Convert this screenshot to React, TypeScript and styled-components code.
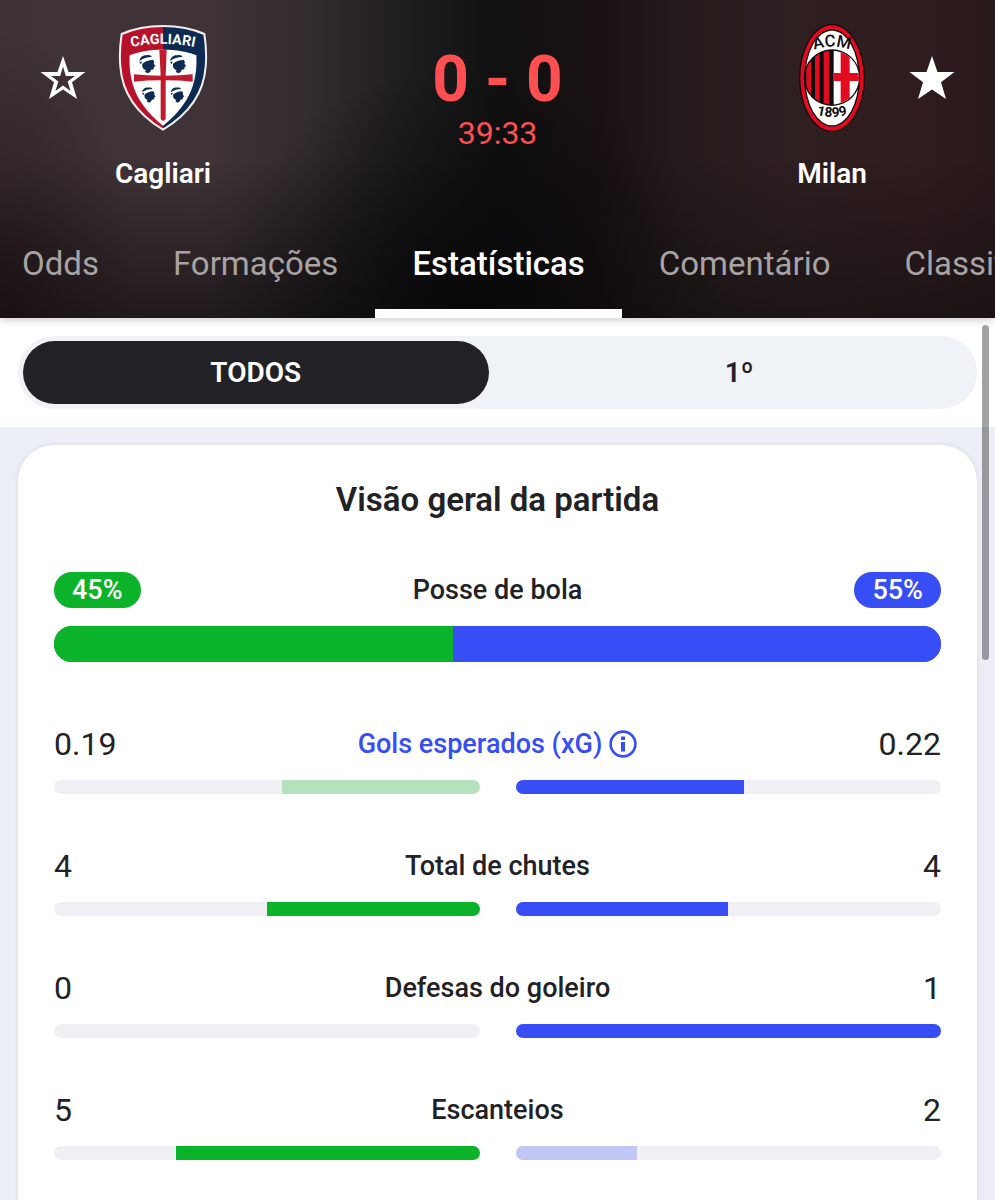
import React from 'react'
import styled, { createGlobalStyle } from 'styled-components'

const GlobalStyle = createGlobalStyle`
	* {
		box-sizing: border-box;
	}

	body {
		margin: 0;
		font-family: Roboto, 'Liberation Sans', sans-serif;
		color: #222226;
	}

	h1, h2, p {
		margin: 0;
	}

	button {
		padding: 0;
		border: 0;
		background: none;
		font: inherit;
		color: inherit;
		cursor: pointer;
	}
`

const Screen = styled.div`
	display: flex;
	flex-direction: column;
	height: 100vh;
	overflow: hidden;
	background: #ebeef5;
`

const MatchHeader = styled.header`
	position: relative;
	z-index: 1;
	flex: none;
	background:
		radial-gradient(ellipse 26% 80% at 47% 100%, rgba(7, 7, 8, 0.9) 0%, rgba(7, 7, 8, 0) 100%),
		radial-gradient(ellipse 14% 90% at 0% 100%, rgba(20, 10, 12, 0.6) 0%, rgba(20, 10, 12, 0) 100%),
		linear-gradient(180deg, rgba(20, 16, 18, 0) 50%, rgba(20, 16, 18, 0.7) 100%),
		linear-gradient(90deg, #3f3236 0%, #403337 20%, #332c30 31%, #1c1b1d 42%, #111112 50%, #1a1112 60%, #261b1c 68%, #2e1f21 80%, #301c1e 92%, #2a191b 100%);
	box-shadow: 0 2px 8px rgba(0, 0, 0, 0.2);
`

const Scoreboard = styled.div`
	display: flex;
	align-items: flex-start;
	padding: 24px 13px 18px;
	color: #fff;
`

const FavoriteButton = styled.button`
	display: flex;
	align-items: center;
	justify-content: center;
	width: 100px;
	height: 108px;
`

const Team = styled.div`
	display: flex;
	flex-direction: column;
	align-items: center;
	gap: 22px;
	width: 100px;
`

const TeamName = styled.h2`
	font-size: 28px;
	font-weight: 600;
	line-height: 40px;
`

const Score = styled.div`
	flex: 1;
	padding-top: 22px;
	text-align: center;
	color: #ff4f52;
`

const Goals = styled.h1`
	font-size: 64px;
	font-weight: 700;
	line-height: 68px;
`

const Clock = styled.p`
	font-size: 32px;
	line-height: 38px;
`

const Tabs = styled.nav`
	display: flex;
	overflow: hidden;
`

const Tab = styled.button<{ $active?: boolean }>`
	flex: none;
	height: 106px;
	padding: 0 37px;
	border-top: 6px solid transparent;
	border-bottom: 9px solid ${({ $active }) => ($active ? '#fff' : 'transparent')};
	font-size: 33px;
	font-weight: ${({ $active }) => ($active ? 500 : 400)};
	color: ${({ $active }) => ($active ? '#fff' : '#a7a3a4')};

	&:first-child {
		padding-left: 22px;
	}
`

const Content = styled.main`
	position: relative;
	flex: 1;
	min-height: 0;
	overflow: hidden;
`

const ScrollArea = styled.div`
	height: 100%;
	overflow-y: auto;
	scrollbar-width: none;
`

const ScrollThumb = styled.div`
	position: absolute;
	top: 7px;
	right: 6px;
	width: 7px;
	height: 38%;
	border-radius: 4px;
	background: rgba(0, 0, 0, 0.36);
`

const PeriodBar = styled.div`
	padding: 18px;
	background: #fff;
`

const PeriodSwitch = styled.div`
	display: flex;
	gap: 18px;
	padding: 5px;
	border-radius: 36px;
	background: #eff3f7;
`

const Period = styled.button<{ $active?: boolean }>`
	flex: 1;
	height: 63px;
	border-radius: 32px;
	background: ${({ $active }) => ($active ? '#222226' : 'transparent')};
	font-size: 28px;
	font-weight: 600;
	color: ${({ $active }) => ($active ? '#fff' : '#222226')};
`

const Card = styled.section`
	margin: 18px;
	padding: 36px 36px 100px;
	border-radius: 36px;
	background: #fff;
	box-shadow: 0 0 4px rgba(34, 34, 38, 0.1);
`

const CardTitle = styled.h2`
	margin-bottom: 54px;
	font-size: 33px;
	font-weight: 600;
	line-height: 37px;
	text-align: center;
`

const StatHead = styled.div`
	display: grid;
	grid-template-columns: 1fr auto 1fr;
	align-items: center;
	height: 36px;
`

const StatName = styled.span`
	font-size: 27px;
	font-weight: 500;
`

const InfoButton = styled.button`
	display: flex;
	align-items: center;
	gap: 7px;
	font-size: 27px;
	font-weight: 500;
	color: #374df5;
`

const StatValue = styled.span<{ $away?: boolean }>`
	justify-self: ${({ $away }) => ($away ? 'end' : 'start')};
	font-size: 32px;
`

const Share = styled.span<{ $away?: boolean }>`
	justify-self: ${({ $away }) => ($away ? 'end' : 'start')};
	padding: 0 18px;
	border-radius: 18px;
	background: ${({ $away }) => ($away ? '#374df5' : '#0bb32a')};
	font-size: 27px;
	font-weight: 500;
	line-height: 36px;
	color: #fff;
`

const PossessionBar = styled.div`
	display: flex;
	height: 36px;
	margin: 18px 0 63px;
	border-radius: 18px;
	overflow: hidden;
	background: linear-gradient(90deg, #0bb32a 20%, #374df5 20%);
`

const PossessionShare = styled.div<{ $away?: boolean }>`
	background: ${({ $away }) => ($away ? '#374df5' : '#0bb32a')};
`

const Stat = styled.div`
	& + & {
		margin-top: 53px;
	}
`

const Tracks = styled.div`
	display: flex;
	gap: 36px;
	margin-top: 19px;
`

const Track = styled.div<{ $home?: boolean }>`
	display: flex;
	flex: 1;
	justify-content: ${({ $home }) => ($home ? 'flex-end' : 'flex-start')};
	height: 14px;
	border-radius: 7px;
	overflow: hidden;
	background: #f0f0f4;
`

const Fill = styled.div<{ $color: string }>`
	background: ${({ $color }) => $color};
`

interface StatData {
	name: string
	home: string
	away: string
	info?: boolean
}

const stats: StatData[] = [
	{ name: 'Gols esperados (xG)', home: '0.19', away: '0.22', info: true },
	{ name: 'Total de chutes', home: '4', away: '4' },
	{ name: 'Defesas do goleiro', home: '0', away: '1' },
	{ name: 'Escanteios', home: '5', away: '2' },
]

const StarIcon: React.FC<{ filled?: boolean }> = ({ filled }) => (
	<svg width='46' height='44' viewBox='0 0 46 44' aria-hidden='true'>
		<path
			fillRule='evenodd'
			d={
				'M23 0L28.5 16H45.5L32 26.2L37 43L23 33.5L9 43L14 26.2L0.5 16H17.5Z' +
				(filled ? '' : 'M23 10.5L20.2 20H11L18.4 25.6L15.4 35L23 29.6L30.6 35L27.6 25.6L35 20H25.8Z')
			}
			fill='#fff'
		/>
	</svg>
)

const InfoIcon: React.FC = () => (
	<svg width='28' height='28' viewBox='0 0 28 28' aria-hidden='true'>
		<circle cx='14' cy='14' r='12.4' fill='none' stroke='currentColor' strokeWidth='2.6' />
		<path d='M12 6.5h4v3.6h-4zM12 12h4v9.6h-4z' fill='currentColor' />
	</svg>
)

const MoorHead: React.FC<{ x: number; y: number; scale?: number }> = ({ x, y, scale = 1 }) => (
	<g transform={`translate(${x} ${y}) scale(${scale})`} fill='#0d2a52'>
		<path d='M0 18C2 6 12 -1 22 1C30 -1 36 1 37 6C24 6 10 10 0 18Z' />
		<path d='M9 26C17 19 27 15 41 14L45 22L43 26L49 33L44 35L43 43L35 44L33 50L26 55L17 51L20 45C12 43 7 36 9 26Z' />
		<path d='M0 22L8 19L5 28Z' />
	</g>
)

const shieldPath =
	'M135 6C180 6 225 15 259 30C264 62 266 95 263 128C257 210 210 272 135 317C60 272 13 210 7 128C4 95 6 62 11 30C45 15 90 6 135 6Z'

const CagliariCrest: React.FC = () => (
	<svg width='90' height='108' viewBox='0 0 270 324' role='img' aria-label='Cagliari'>
		<defs>
			<path id='cagliari-arc' d='M30 71Q135 48 240 71' />
			<clipPath id='cagliari-left'>
				<path d='M0 0H135V324H0Z' />
			</clipPath>
		</defs>
		<path d={shieldPath} fill='#0d2a52' />
		<path clipPath='url(#cagliari-left)' d={shieldPath} fill='#b8122b' />
		<path d={shieldPath} fill='none' stroke='#f3eff0' strokeWidth='6' />
		<path d='M135 77C175 77 210 83 235 94C238 160 225 235 135 305C45 235 32 160 35 94C60 83 95 77 135 77Z' fill='#fff' />
		<path d='M124 78H146L143 155Q185 155 224 151V173Q185 169 143 169V286L136 291L128 286V169Q85 169 48 173V151Q85 155 128 155Z' fill='#c01a2f' />
		<MoorHead x={64} y={93} />
		<MoorHead x={156} y={93} />
		<MoorHead x={72} y={190} scale={0.84} />
		<MoorHead x={158} y={190} scale={0.84} />
		<text fontSize='43' fontWeight='700' fill='#fff' textAnchor='middle'>
			<textPath href='#cagliari-arc' startOffset='50%'>CAGLIARI</textPath>
		</text>
	</svg>
)

const MilanCrest: React.FC = () => (
	<svg width='66' height='108' viewBox='0 0 198 324' role='img' aria-label='Milan'>
		<defs>
			<path id='milan-top' d='M30 83Q99 53 168 83' />
			<path id='milan-bottom' d='M30 265Q99 293 168 265' />
			<clipPath id='milan-field'>
				<circle cx='99' cy='161' r='81' />
			</clipPath>
		</defs>
		<ellipse cx='99' cy='162' rx='99' ry='162' fill='#17090b' />
		<ellipse cx='99' cy='162' rx='95' ry='158' fill='#e30b20' />
		<ellipse cx='99' cy='162' rx='84' ry='146' fill='#100c0d' />
		<ellipse cx='99' cy='162' rx='80' ry='142' fill='#fff' />
		<circle cx='99' cy='161' r='85' fill='#100c0d' />
		<g clipPath='url(#milan-field)'>
			<path d='M0 60H102V260H0Z' fill='#100c0d' />
			<path d='M22 60H36V260H22ZM48 60H62V260H48ZM74 60H90V260H74Z' fill='#e30b20' />
			<path d='M104 60H200V260H104Z' fill='#fff' />
			<path d='M125 60H152V147H200V171H152V260H125V171H104V147H125Z' fill='#e30b20' />
		</g>
		<text fontSize='50' fontWeight='500' fill='#100c0d' textAnchor='middle'>
			<textPath href='#milan-top' startOffset='50%'>ACM</textPath>
		</text>
		<text fontSize='41' fontWeight='700' fill='#100c0d' textAnchor='middle'>
			<textPath href='#milan-bottom' startOffset='50%'>1899</textPath>
		</text>
	</svg>
)

const StatRow: React.FC<{ stat: StatData }> = ({ stat }) => {
	const home = Number(stat.home)
	const away = Number(stat.away)
	const total = home + away

	return (
		<Stat>
			<StatHead>
				<StatValue>{stat.home}</StatValue>
				{stat.info ? (
					<InfoButton>
						{stat.name}
						<InfoIcon />
					</InfoButton>
				) : (
					<StatName>{stat.name}</StatName>
				)}
				<StatValue $away>{stat.away}</StatValue>
			</StatHead>
			<Tracks>
				<Track $home>
					<Fill $color={home < away ? '#b6e1bf' : '#0bb32a'} style={{ width: `${(home / total) * 100}%` }} />
				</Track>
				<Track>
					<Fill $color={away < home ? '#c1c7f4' : '#374df5'} style={{ width: `${(away / total) * 100}%` }} />
				</Track>
			</Tracks>
		</Stat>
	)
}

const App: React.FC = () => (
	<Screen>
		<GlobalStyle />
		<MatchHeader>
			<Scoreboard>
				<FavoriteButton aria-label='Favoritar Cagliari'>
					<StarIcon />
				</FavoriteButton>
				<Team>
					<CagliariCrest />
					<TeamName>Cagliari</TeamName>
				</Team>
				<Score>
					<Goals>0 - 0</Goals>
					<Clock>39:33</Clock>
				</Score>
				<Team>
					<MilanCrest />
					<TeamName>Milan</TeamName>
				</Team>
				<FavoriteButton aria-label='Favoritar Milan'>
					<StarIcon filled />
				</FavoriteButton>
			</Scoreboard>
			<Tabs>
				<Tab>Odds</Tab>
				<Tab>Formações</Tab>
				<Tab $active>Estatísticas</Tab>
				<Tab>Comentário</Tab>
				<Tab>Classificação</Tab>
			</Tabs>
		</MatchHeader>
		<Content>
			<ScrollArea>
				<PeriodBar>
					<PeriodSwitch>
						<Period $active>TODOS</Period>
						<Period>1º</Period>
					</PeriodSwitch>
				</PeriodBar>
				<Card>
					<CardTitle>Visão geral da partida</CardTitle>
					<StatHead>
						<Share>45%</Share>
						<StatName>Posse de bola</StatName>
						<Share $away>55%</Share>
					</StatHead>
					<PossessionBar>
						<PossessionShare style={{ width: '45%' }} />
						<PossessionShare $away style={{ width: '55%' }} />
					</PossessionBar>
					{stats.map((stat) => (
						<StatRow key={stat.name} stat={stat} />
					))}
				</Card>
			</ScrollArea>
			<ScrollThumb />
		</Content>
	</Screen>
)

export default App
